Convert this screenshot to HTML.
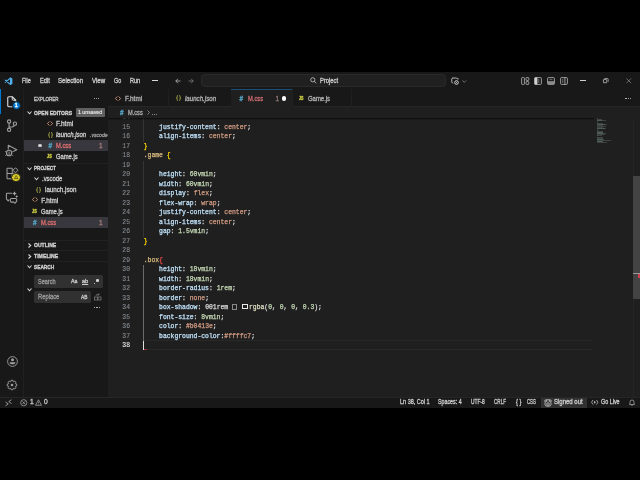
<!DOCTYPE html>
<html><head><meta charset="utf-8">
<style>
*{box-sizing:border-box;margin:0;padding:0}
html,body{width:640px;height:480px;background:#000;overflow:hidden}
body{font-family:"Liberation Sans",sans-serif;color:#cccccc;position:relative}
#app{-webkit-text-stroke:0.3px;will-change:transform}
.mono{-webkit-text-stroke:0.25px}
.a{position:absolute;white-space:nowrap}
#app{position:absolute;left:0;top:72px;width:640px;height:336px;background:#181818;overflow:hidden}
.t{font-size:6.3px;line-height:8px}
.mono{font-family:"Liberation Mono",monospace;font-size:6.4px;line-height:9.5px}
.ln{color:#6e7681;text-align:right;width:20px;-webkit-text-stroke:0.1px}
.p{color:#bfe0f8}.v{color:#d09a82}.n{color:#c4d8b4}.s{color:#d7ba7d}.b{color:#ffd700}.w{color:#dadada}
svg{position:absolute;overflow:visible}
</style></head><body>
<div id="app">
 <!-- title bar -->
 <div class="a" style="left:0;top:0;width:640px;height:17px;background:#181818"></div>
 <svg style="left:4px;top:5px" width="9" height="8.5" viewBox="0 0 18 17"><path d="M13 2L2.5 10.8M13 15L2.5 6.2" stroke="#4fb0ec" stroke-width="2.3" stroke-linecap="round"/><path d="M12 1L16.8 3.2V13.8L12 16Z" fill="#4fb0ec"/></svg>
 <!-- nav arrows -->
 <svg style="left:175px;top:5.5px" width="6" height="6" viewBox="0 0 12 12"><path d="M11 6H1.5M6 1.5L1.5 6L6 10.5" stroke="#cccccc" stroke-width="1.4" fill="none"/></svg>
 <svg style="left:188px;top:5.5px" width="6" height="6" viewBox="0 0 12 12"><path d="M1 6H10.5M6 1.5L10.5 6L6 10.5" stroke="#8a8a8a" stroke-width="1.4" fill="none"/></svg>
 <!-- command center -->
 <div class="a" style="left:201px;top:2.4px;width:245px;height:12.6px;background:#202020;border:0.6px solid #2a2a2a;border-radius:3.8px"></div>
 <svg style="left:310px;top:5.2px" width="7" height="7" viewBox="0 0 14 14"><circle cx="5.6" cy="5.6" r="4.2" stroke="#d0d0d0" stroke-width="1.5" fill="none"/><path d="M8.6 8.6L12.5 12.5" stroke="#d0d0d0" stroke-width="1.6"/></svg>
 <!-- copilot -->
 <svg style="left:451px;top:4.8px" width="9.5" height="8.5" viewBox="0 0 19 17"><path d="M9 2H4Q1.5 2 1.5 4.5V9Q1.5 11 3 12L4.5 13" stroke="#d0d0d0" stroke-width="1.8" fill="none" stroke-linejoin="round"/><path d="M9 2H10Q12 2 12.5 3.5" stroke="#d0d0d0" stroke-width="1.8" fill="none"/><circle cx="11" cy="11" r="3.6" stroke="#d8d8d8" stroke-width="2" fill="none"/><circle cx="11" cy="11" r="1" fill="#d8d8d8"/><path d="M14 2.5V5M12.8 3.8H15.2" stroke="#d8d8d8" stroke-width="1.2"/></svg>
 <svg style="left:461.5px;top:7.6px" width="4.6" height="2.8" viewBox="0 0 10 6"><path d="M1 1L5 5L9 1" stroke="#b0b0b0" stroke-width="1.3" fill="none"/></svg>
 <!-- layout icons -->
 <svg style="left:520.5px;top:4.8px" width="8.5" height="8" viewBox="0 0 17 16"><rect x="1.2" y="1.2" width="5.6" height="13.6" rx="1.4" stroke="#d0d0d0" stroke-width="1.4" fill="none"/><rect x="10" y="1.2" width="5.6" height="5.6" rx="1.2" stroke="#d0d0d0" stroke-width="1.4" fill="none"/><rect x="10" y="9.2" width="5.6" height="5.6" rx="1.2" stroke="#d0d0d0" stroke-width="1.4" fill="none"/></svg>
 <svg style="left:533.8px;top:4.8px" width="8" height="8" viewBox="0 0 16 16"><rect x="1.2" y="1.2" width="13.6" height="13.6" rx="1.8" stroke="#d0d0d0" stroke-width="1.4" fill="none"/><rect x="1.2" y="1.2" width="5.6" height="13.6" rx="1" fill="#d0d0d0"/><path d="M9.5 4V12" stroke="#d0d0d0" stroke-width="1"/></svg>
 <svg style="left:547px;top:4.8px" width="8" height="8" viewBox="0 0 16 16"><rect x="1.2" y="1.2" width="13.6" height="13.6" rx="1.8" stroke="#d0d0d0" stroke-width="1.4" fill="none"/><path d="M1.2 9.5H14.8" stroke="#d0d0d0" stroke-width="1.4"/><rect x="2" y="10" width="12" height="4" fill="#8a8a8a"/><path d="M5 5.2H11" stroke="#d0d0d0" stroke-width="0.9"/></svg>
 <svg style="left:559.8px;top:4.8px" width="8" height="8" viewBox="0 0 16 16"><rect x="1.2" y="1.2" width="13.6" height="13.6" rx="1.8" stroke="#d0d0d0" stroke-width="1.4" fill="none"/><path d="M9.8 1.2V14.8" stroke="#d0d0d0" stroke-width="1.4"/><path d="M5.5 4V12" stroke="#d0d0d0" stroke-width="0.9"/></svg>
 <!-- window controls -->
 <div class="a" style="left:580px;top:8.1px;width:5.8px;height:0.8px;background:#d0d0d0"></div>
 <svg style="left:602.8px;top:6.3px" width="5.6" height="5.2" viewBox="0 0 11 10"><rect x="0.8" y="2.6" width="6.6" height="6.6" rx="1" stroke="#d8d8d8" stroke-width="1.4" fill="none"/><path d="M2.8 0.8H8.4Q10.2 0.8 10.2 2.6V7.6" stroke="#d8d8d8" stroke-width="1.2" fill="none"/></svg>
 <svg style="left:626px;top:6px" width="5.6" height="5.6" viewBox="0 0 12 12"><path d="M1 1L11 11M11 1L1 11" stroke="#c8c8c8" stroke-width="1"/></svg>

 <!-- activity bar -->
 <div class="a" style="left:0;top:17px;width:24px;height:308px;background:#181818;border-right:1px solid #202020"></div>
 <div class="a" style="left:0;top:17px;width:1px;height:24.5px;background:#0078d4"></div>
 <!-- explorer icon -->
 <svg style="left:7px;top:23.5px" width="9.5" height="11.5" viewBox="0 0 19 23"><path d="M4 1.5H10.5L17.5 8.5V19Q17.5 21.5 15 21.5H4Q1.5 21.5 1.5 19V4Q1.5 1.5 4 1.5Z" stroke="#dedede" stroke-width="2.2" fill="none" stroke-linejoin="round"/><path d="M10.5 1.5V6.5Q10.5 8.5 12.5 8.5H17.5" stroke="#dedede" stroke-width="2" fill="none"/></svg>
 <div class="a" style="left:11.6px;top:29px;width:9px;height:9px;border-radius:50%;background:#0078d4;border:0.7px solid #181818;color:#fff;font-size:5.2px;line-height:7.6px;text-align:center;font-weight:bold">1</div>
 <!-- source control -->
 <svg style="left:2px;top:43px" width="20" height="20" viewBox="0 0 40 40"><circle cx="14.2" cy="13" r="3.3" stroke="#a0a0a0" stroke-width="2.2" fill="none"/><circle cx="14.2" cy="29.6" r="3.3" stroke="#a0a0a0" stroke-width="2.2" fill="none"/><circle cx="25.8" cy="17.3" r="3.3" stroke="#a0a0a0" stroke-width="2.2" fill="none"/><path d="M14.2 16.3V26.3M25 20.5Q24 24 19.5 24H14.5" stroke="#a0a0a0" stroke-width="2.2" fill="none"/></svg>
 <!-- run -->
 <svg style="left:2px;top:68px" width="20" height="20" viewBox="0 0 40 40"><path d="M12.5 19V10.5L29.6 19.4L22.5 23.2" stroke="#9a9a9a" stroke-width="2.2" fill="none" stroke-linejoin="round"/><path d="M14.2 20.5C10 20.5 9 23 9 26C9 29.5 11 31.5 14.2 31.5C17.4 31.5 19.4 29.5 19.4 26C19.4 23 18.4 20.5 14.2 20.5Z" stroke="#9a9a9a" stroke-width="2.4" fill="none"/><path d="M14.2 23V30M8 24L6 22.5M20.4 24L22.4 22.5M8.5 29.5L6.5 31.5M19.9 29.5L21.9 31.5" stroke="#9a9a9a" stroke-width="1.8"/></svg>
 <!-- extensions -->
 <svg style="left:2px;top:92px" width="20" height="20" viewBox="0 0 40 40"><path d="M10 8.5H20.5V29.5H10Z M10 19H30.5V29.5M20.5 19V29.5" stroke="#a0a0a0" stroke-width="2" fill="none"/><path d="M27 7.5L32 12.5L27 17.5L22 12.5Z" stroke="#a0a0a0" stroke-width="2" fill="none" stroke-linejoin="round"/></svg>
 <div class="a" style="left:11.4px;top:100.9px;width:9.2px;height:9.2px;border-radius:50%;background:#d6c926;border:0.8px solid #181818"></div>
 <svg style="left:13.8px;top:102.9px" width="4.4" height="4" viewBox="0 0 10 9"><path d="M5 1.2L9 8H1Z" stroke="#3a3510" stroke-width="1.5" fill="none" stroke-linejoin="round"/></svg>
 <!-- chat -->
 <svg style="left:2px;top:116px" width="20" height="20" viewBox="0 0 40 40"><path d="M20 10.5H10.5Q8.8 10.5 8.8 12.2V21.5Q8.8 22.8 10 23.4L12.3 25.8L14.5 23" stroke="#a0a0a0" stroke-width="2.1" fill="none" stroke-linejoin="round"/><path d="M18.8 20.8H27.2Q29.4 20.8 29.4 23V26Q29.4 28.2 27.2 28.2L26.2 30.6L23.4 28.2H18.8Q16.6 28.2 16.6 26V23Q16.6 20.8 18.8 20.8Z" stroke="#a0a0a0" stroke-width="2.1" fill="none" stroke-linejoin="round"/><path d="M25 6.5Q25.8 10.2 29.5 11Q25.8 11.8 25 15.5Q24.2 11.8 20.5 11Q24.2 10.2 25 6.5Z M29.5 14Q30.1 16.4 32.5 17Q30.1 17.6 29.5 20Q28.9 17.6 26.5 17Q28.9 16.4 29.5 14Z" fill="#a8a8a8"/></svg>
 <!-- account -->
 <svg style="left:6.6px;top:283.5px" width="11" height="11" viewBox="0 0 22 22"><circle cx="11" cy="11" r="9.8" stroke="#a0a0a0" stroke-width="1.8" fill="none"/><circle cx="11" cy="7.6" r="3" fill="#a0a0a0"/><path d="M5.2 12.6H16.8Q16.8 16.6 11 16.6Q5.2 16.6 5.2 12.6Z" fill="#a0a0a0"/></svg>
 <!-- settings -->
 <svg style="left:6px;top:307.3px" width="12" height="12" viewBox="0 0 24 24"><path d="M18.70 9.38L21.45 10.31L21.45 13.69L18.70 14.62L18.60 14.89L19.88 17.49L17.49 19.88L14.89 18.60L14.62 18.70L13.69 21.45L10.31 21.45L9.38 18.70L9.11 18.60L6.51 19.88L4.12 17.49L5.40 14.89L5.30 14.62L2.55 13.69L2.55 10.31L5.30 9.38L5.40 9.11L4.12 6.51L6.51 4.12L9.11 5.40L9.38 5.30L10.31 2.55L13.69 2.55L14.62 5.30L14.89 5.40L17.49 4.12L19.88 6.51L18.60 9.11Z" stroke="#a0a0a0" stroke-width="1.9" fill="none" stroke-linejoin="round"/><circle cx="12" cy="12" r="2.6" fill="#a0a0a0"/></svg>

 <!-- sidebar -->
 <div class="a" style="left:24px;top:17px;width:83.5px;height:308px;background:#181818"></div>
 <!-- open editors -->
 <svg style="left:27px;top:38.5px" width="5" height="3.5" viewBox="0 0 10 7"><path d="M1 1L5 5.5L9 1" stroke="#d8d8d8" stroke-width="2.1" fill="none"/></svg>
 <div class="a" style="left:76px;top:36.2px;width:28.7px;height:9px;background:#5f5f5f;border-radius:1px;"></div>
 <div class="a" style="left:24px;top:68.2px;width:83.5px;height:10.5px;background:#37373d"></div>
 <div class="a" style="left:38px;top:71.7px;width:3.5px;height:3.5px;border-radius:50%;background:#d0d0d0"></div>
 <div class="a" style="left:24px;top:91.2px;width:83.5px;height:0.5px;background:#212121"></div>
 <!-- project -->
 <svg style="left:27px;top:94.5px" width="5" height="3.5" viewBox="0 0 10 7"><path d="M1 1L5 5.5L9 1" stroke="#d8d8d8" stroke-width="2.1" fill="none"/></svg>
 <svg style="left:33.5px;top:105.2px" width="5" height="3.5" viewBox="0 0 10 7"><path d="M1 1L5 5.5L9 1" stroke="#d8d8d8" stroke-width="2.1" fill="none"/></svg>
 <div class="a" style="left:24px;top:145px;width:83.5px;height:11px;background:#37373d"></div>
 <!-- outline etc -->
 <div class="a" style="left:24px;top:167.5px;width:83.5px;height:0.5px;background:#212121"></div>
 <svg style="left:27.5px;top:171px" width="3.5" height="5" viewBox="0 0 7 10"><path d="M1 1L5.5 5L1 9" stroke="#d8d8d8" stroke-width="2.1" fill="none"/></svg>
 <div class="a" style="left:24px;top:178.3px;width:83.5px;height:0.5px;background:#212121"></div>
 <svg style="left:27.5px;top:181.5px" width="3.5" height="5" viewBox="0 0 7 10"><path d="M1 1L5.5 5L1 9" stroke="#d8d8d8" stroke-width="2.1" fill="none"/></svg>
 <div class="a" style="left:24px;top:189.3px;width:83.5px;height:0.5px;background:#212121"></div>
 <svg style="left:27px;top:193px" width="5" height="3.5" viewBox="0 0 10 7"><path d="M1 1L5 5.5L9 1" stroke="#d8d8d8" stroke-width="2.1" fill="none"/></svg>
 <!-- search inputs -->
 <div class="a" style="left:34.2px;top:203px;width:68.6px;height:12.5px;background:#313131;border-radius:1.5px"></div>
 <svg style="left:26.5px;top:215.5px" width="5" height="3.5" viewBox="0 0 10 7"><path d="M1 1L5 5.5L9 1" stroke="#d8d8d8" stroke-width="2.1" fill="none"/></svg>
 <div class="a" style="left:34.2px;top:218.8px;width:56.6px;height:12.5px;background:#313131;border-radius:1.5px"></div>
 <svg style="left:94px;top:221px" width="7.5" height="7.5" viewBox="0 0 15 15"><rect x="1" y="8" width="6" height="6" stroke="#8b8b8b" stroke-width="1.3" fill="none"/><rect x="8" y="8" width="6" height="6" stroke="#8b8b8b" stroke-width="1.3" fill="none"/><path d="M4 6C4 2 8 2 10 4M10 1V4H7" stroke="#8b8b8b" stroke-width="1.3" fill="none"/></svg>

 <!-- tabs -->
 <div class="a" style="left:108px;top:17px;width:532px;height:17.5px;background:#181818;border-bottom:0.5px solid #262626"></div>
 <div class="a" style="left:167.5px;top:17px;width:0.5px;height:17.5px;background:#202020"></div>
 <div class="a" style="left:230.5px;top:17px;width:0.5px;height:17.5px;background:#202020"></div>
 <div class="a" style="left:231px;top:17px;width:61px;height:18px;background:#1f1f1f;border-top:1px solid #1a4f78"></div>
 <div class="a" style="left:292px;top:17px;width:0.5px;height:17.5px;background:#202020"></div>
 <div class="a" style="left:351px;top:17px;width:0.5px;height:17.5px;background:#202020"></div>
 <div class="a" style="left:281.6px;top:23.9px;width:4.8px;height:4.8px;border-radius:50%;background:#ffffff"></div>
 <!-- breadcrumbs -->
 <div class="a" style="left:108px;top:35px;width:532px;height:11px;background:#1f1f1f"></div>
 <!-- editor -->
 <div class="a" style="left:108px;top:46px;width:532px;height:279px;background:#1f1f1f"></div>
 <div class="a" style="left:108px;top:46px;width:532px;height:279px;overflow:hidden"><div class="a" style="left:35px;top:222.35px;width:449.5px;height:9.6px;border-top:0.8px solid #282828;border-bottom:0.8px solid #282828"></div>
<div class="a mono ln" style="left:2px;top:-4.55px;color:#858a90">14</div>
<div class="a mono ln" style="left:2px;top:4.95px;color:#858a90">15</div>
<div class="a mono" style="left:35.75px;top:4.95px"><span class="w">&nbsp;&nbsp;&nbsp;&nbsp;</span><span class="p">justify-content</span><span class="w">:&nbsp;</span><span class="v">center</span><span class="w">;</span></div>
<div class="a mono ln" style="left:2px;top:14.45px;color:#858a90">16</div>
<div class="a mono" style="left:35.75px;top:14.45px"><span class="w">&nbsp;&nbsp;&nbsp;&nbsp;</span><span class="p">align-items</span><span class="w">:&nbsp;</span><span class="v">center</span><span class="w">;</span></div>
<div class="a mono ln" style="left:2px;top:23.95px;color:#858a90">17</div>
<div class="a mono" style="left:35.75px;top:23.95px"><span class="b">}</span></div>
<div class="a mono ln" style="left:2px;top:33.45px;color:#858a90">18</div>
<div class="a mono" style="left:35.75px;top:33.45px"><span class="s">.game</span><span class="w">&nbsp;</span><span class="b">{</span></div>
<div class="a mono ln" style="left:2px;top:42.95px;color:#858a90">19</div>
<div class="a mono ln" style="left:2px;top:52.45px;color:#858a90">20</div>
<div class="a mono" style="left:35.75px;top:52.45px"><span class="w">&nbsp;&nbsp;&nbsp;&nbsp;</span><span class="p">height</span><span class="w">:&nbsp;</span><span class="n">60vmin</span><span class="w">;</span></div>
<div class="a mono ln" style="left:2px;top:61.95px;color:#858a90">21</div>
<div class="a mono" style="left:35.75px;top:61.95px"><span class="w">&nbsp;&nbsp;&nbsp;&nbsp;</span><span class="p">width</span><span class="w">:&nbsp;</span><span class="n">60vmin</span><span class="w">;</span></div>
<div class="a mono ln" style="left:2px;top:71.45px;color:#858a90">22</div>
<div class="a mono" style="left:35.75px;top:71.45px"><span class="w">&nbsp;&nbsp;&nbsp;&nbsp;</span><span class="p">display</span><span class="w">:&nbsp;</span><span class="v">flex</span><span class="w">;</span></div>
<div class="a mono ln" style="left:2px;top:80.95px;color:#858a90">23</div>
<div class="a mono" style="left:35.75px;top:80.95px"><span class="w">&nbsp;&nbsp;&nbsp;&nbsp;</span><span class="p">flex-wrap</span><span class="w">:&nbsp;</span><span class="v">wrap</span><span class="w">;</span></div>
<div class="a mono ln" style="left:2px;top:90.45px;color:#858a90">24</div>
<div class="a mono" style="left:35.75px;top:90.45px"><span class="w">&nbsp;&nbsp;&nbsp;&nbsp;</span><span class="p">justify-content</span><span class="w">:&nbsp;</span><span class="v">center</span><span class="w">;</span></div>
<div class="a mono ln" style="left:2px;top:99.95px;color:#858a90">25</div>
<div class="a mono" style="left:35.75px;top:99.95px"><span class="w">&nbsp;&nbsp;&nbsp;&nbsp;</span><span class="p">align-items</span><span class="w">:&nbsp;</span><span class="v">center</span><span class="w">;</span></div>
<div class="a mono ln" style="left:2px;top:109.45px;color:#858a90">26</div>
<div class="a mono" style="left:35.75px;top:109.45px"><span class="w">&nbsp;&nbsp;&nbsp;&nbsp;</span><span class="p">gap</span><span class="w">:&nbsp;</span><span class="n">1.5vmin</span><span class="w">;</span></div>
<div class="a mono ln" style="left:2px;top:118.95px;color:#858a90">27</div>
<div class="a mono" style="left:35.75px;top:118.95px"><span class="b">}</span></div>
<div class="a mono ln" style="left:2px;top:128.45px;color:#858a90">28</div>
<div class="a mono ln" style="left:2px;top:137.95px;color:#858a90">29</div>
<div class="a mono" style="left:35.75px;top:137.95px"><span class="s">.box</span><span style="color:#f44747">{</span></div>
<div class="a mono ln" style="left:2px;top:147.45px;color:#858a90">30</div>
<div class="a mono" style="left:35.75px;top:147.45px"><span class="w">&nbsp;&nbsp;&nbsp;&nbsp;</span><span class="p">height</span><span class="w">:&nbsp;</span><span class="n">18vmin</span><span class="w">;</span></div>
<div class="a mono ln" style="left:2px;top:156.95px;color:#858a90">31</div>
<div class="a mono" style="left:35.75px;top:156.95px"><span class="w">&nbsp;&nbsp;&nbsp;&nbsp;</span><span class="p">width</span><span class="w">:&nbsp;</span><span class="n">18vmin</span><span class="w">;</span></div>
<div class="a mono ln" style="left:2px;top:166.45px;color:#858a90">32</div>
<div class="a mono" style="left:35.75px;top:166.45px"><span class="w">&nbsp;&nbsp;&nbsp;&nbsp;</span><span class="p">border-radius</span><span class="w">:&nbsp;</span><span class="n">1rem</span><span class="w">;</span></div>
<div class="a mono ln" style="left:2px;top:175.95px;color:#858a90">33</div>
<div class="a mono" style="left:35.75px;top:175.95px"><span class="w">&nbsp;&nbsp;&nbsp;&nbsp;</span><span class="p">border</span><span class="w">:&nbsp;</span><span class="v">none</span><span class="w">;</span></div>
<div class="a mono ln" style="left:2px;top:185.45px;color:#858a90">34</div>
<div class="a mono" style="left:35.75px;top:185.45px"><span class="w">&nbsp;&nbsp;&nbsp;&nbsp;</span><span class="p">box-shadow</span><span class="w">:&nbsp;</span><span class="w">001rem</span></div>
<div class="a mono ln" style="left:2px;top:194.95px;color:#858a90">35</div>
<div class="a mono" style="left:35.75px;top:194.95px"><span class="w">&nbsp;&nbsp;&nbsp;&nbsp;</span><span class="p">font-size</span><span class="w">:&nbsp;</span><span class="n">8vmin</span><span class="w">;</span></div>
<div class="a mono ln" style="left:2px;top:204.45px;color:#858a90">36</div>
<div class="a mono" style="left:35.75px;top:204.45px"><span class="w">&nbsp;&nbsp;&nbsp;&nbsp;</span><span class="p">color</span><span class="w">:&nbsp;</span><span class="v">#b0413e</span><span class="w">;</span></div>
<div class="a mono ln" style="left:2px;top:213.95px;color:#858a90">37</div>
<div class="a mono" style="left:35.75px;top:213.95px"><span class="w">&nbsp;&nbsp;&nbsp;&nbsp;</span><span class="p">background-color</span><span class="w">:</span><span class="v">#ffffc7</span><span class="w">;</span></div>
<div class="a mono ln" style="left:2px;top:223.45px;color:#e8e8e8">38</div>
<div class="a" style="left:34.9px;top:-4.55px;width:0.5px;height:28.50px;background:#353535"></div>
<div class="a" style="left:34.9px;top:42.95px;width:0.5px;height:76.00px;background:#353535"></div>
<div class="a" style="left:34.9px;top:147.45px;width:0.5px;height:76.00px;background:#6a6a6a"></div>
<div class="a mono" style="left:141px;top:185.45px"><span style="color:#dcdcc0">rgba</span><span class="w">(</span><span class="n">0</span><span class="w">,&nbsp;</span><span class="n">0</span><span class="w">,&nbsp;</span><span class="n">0</span><span class="w">,&nbsp;</span><span class="n">0.3</span><span class="w">);</span></div>
<div class="a" style="left:124px;top:185.5px;width:5px;height:6px;border:0.8px solid #8a8a8a"></div>
<div class="a" style="left:134.2px;top:185.5px;width:6.2px;height:5.8px;border:1.1px solid #e8e8e8;background:#1f1f1f"></div>
<div class="a" style="left:34.9px;top:222.55px;width:0.9px;height:9.3px;background:#e0e0e0"></div>
<div class="a" style="left:36px;top:231.05px;width:3px;height:1px;background:#a03040"></div>
<div class="a" style="left:488.8px;top:0.40px;width:1.36px;height:0.65px;background:#8aa59c;opacity:0.26"></div>
<div class="a" style="left:488.8px;top:1.06px;width:4.76px;height:0.65px;background:#8aa59c;opacity:0.26"></div>
<div class="a" style="left:488.8px;top:1.71px;width:5.10px;height:0.65px;background:#8aa59c;opacity:0.26"></div>
<div class="a" style="left:488.8px;top:2.37px;width:9.18px;height:0.65px;background:#8aa59c;opacity:0.26"></div>
<div class="a" style="left:488.8px;top:3.02px;width:0.34px;height:0.65px;background:#8aa59c;opacity:0.26"></div>
<div class="a" style="left:488.8px;top:4.33px;width:1.70px;height:0.65px;background:#8aa59c;opacity:0.26"></div>
<div class="a" style="left:488.8px;top:4.99px;width:6.12px;height:0.65px;background:#8aa59c;opacity:0.26"></div>
<div class="a" style="left:488.8px;top:5.64px;width:9.86px;height:0.65px;background:#8aa59c;opacity:0.26"></div>
<div class="a" style="left:488.8px;top:6.30px;width:8.50px;height:0.65px;background:#8aa59c;opacity:0.26"></div>
<div class="a" style="left:488.8px;top:6.95px;width:6.12px;height:0.65px;background:#8aa59c;opacity:0.26"></div>
<div class="a" style="left:488.8px;top:8.26px;width:9.18px;height:0.65px;background:#8aa59c;opacity:0.26"></div>
<div class="a" style="left:488.8px;top:8.92px;width:6.12px;height:0.65px;background:#8aa59c;opacity:0.26"></div>
<div class="a" style="left:488.8px;top:9.57px;width:9.52px;height:0.65px;background:#8aa59c;opacity:0.26"></div>
<div class="a" style="left:488.8px;top:10.23px;width:8.16px;height:0.65px;background:#8aa59c;opacity:0.26"></div>
<div class="a" style="left:488.8px;top:10.88px;width:0.34px;height:0.65px;background:#8aa59c;opacity:0.26"></div>
<div class="a" style="left:488.8px;top:11.54px;width:2.38px;height:0.65px;background:#8aa59c;opacity:0.26"></div>
<div class="a" style="left:488.8px;top:12.85px;width:6.46px;height:0.65px;background:#8aa59c;opacity:0.26"></div>
<div class="a" style="left:488.8px;top:13.50px;width:6.12px;height:0.65px;background:#8aa59c;opacity:0.26"></div>
<div class="a" style="left:488.8px;top:14.16px;width:6.12px;height:0.65px;background:#8aa59c;opacity:0.26"></div>
<div class="a" style="left:488.8px;top:14.81px;width:6.46px;height:0.65px;background:#8aa59c;opacity:0.26"></div>
<div class="a" style="left:488.8px;top:15.47px;width:9.52px;height:0.65px;background:#8aa59c;opacity:0.26"></div>
<div class="a" style="left:488.8px;top:16.12px;width:8.16px;height:0.65px;background:#8aa59c;opacity:0.26"></div>
<div class="a" style="left:488.8px;top:16.78px;width:5.10px;height:0.65px;background:#8aa59c;opacity:0.26"></div>
<div class="a" style="left:488.8px;top:17.43px;width:0.34px;height:0.65px;background:#8aa59c;opacity:0.26"></div>
<div class="a" style="left:488.8px;top:18.74px;width:1.70px;height:0.65px;background:#8aa59c;opacity:0.26"></div>
<div class="a" style="left:488.8px;top:19.40px;width:6.46px;height:0.65px;background:#8aa59c;opacity:0.26"></div>
<div class="a" style="left:488.8px;top:20.05px;width:6.12px;height:0.65px;background:#8aa59c;opacity:0.26"></div>
<div class="a" style="left:488.8px;top:20.71px;width:7.48px;height:0.65px;background:#8aa59c;opacity:0.26"></div>
<div class="a" style="left:488.8px;top:21.36px;width:5.78px;height:0.65px;background:#8aa59c;opacity:0.26"></div>
<div class="a" style="left:488.8px;top:22.02px;width:14.62px;height:0.65px;background:#8aa59c;opacity:0.26"></div>
<div class="a" style="left:488.8px;top:22.67px;width:6.12px;height:0.65px;background:#8aa59c;opacity:0.26"></div>
<div class="a" style="left:488.8px;top:23.33px;width:6.46px;height:0.65px;background:#8aa59c;opacity:0.26"></div>
<div class="a" style="left:488.8px;top:23.98px;width:9.86px;height:0.65px;background:#8aa59c;opacity:0.26"></div>
<div class="a" style="left:525px;top:0;width:1px;height:279px;background:#242424"></div>
<div class="a" style="left:525px;top:57.8px;width:7px;height:123px;background:#434343"></div>
<div class="a" style="left:525px;top:155px;width:7px;height:0.8px;background:#9a9a9a"></div>
<div class="a" style="left:530px;top:156px;width:2px;height:4px;background:#d04050"></div>
<div class="a" style="left:0;top:0;width:486px;height:1.5px;background:linear-gradient(#000000aa,#00000000)"></div></div>

 <!-- status bar -->
 <div class="a" style="left:0;top:325px;width:640px;height:11px;background:#181818;border-top:0.5px solid #262626"></div>
 <svg style="left:4.5px;top:327px" width="7" height="7.5" viewBox="0 0 14 15"><path d="M1 6L6.5 9.8L1 13.6M13 1.4L7.5 5.2L13 9" stroke="#d0d0d0" stroke-width="1.3" fill="none"/></svg>
 <svg style="left:20px;top:326.7px" width="7.5" height="7.5" viewBox="0 0 15 15"><circle cx="7.5" cy="7.5" r="6.2" stroke="#cccccc" stroke-width="1.2" fill="none"/><path d="M4.8 4.8L10.2 10.2M10.2 4.8L4.8 10.2" stroke="#cccccc" stroke-width="1.2"/></svg>
 <svg style="left:34.5px;top:326.7px" width="7" height="7" viewBox="0 0 14 14"><path d="M7 1.5L13 12.5H1Z" stroke="#cccccc" stroke-width="1.2" fill="none" stroke-linejoin="round"/><path d="M7 5.5V8.8M7 10V11" stroke="#cccccc" stroke-width="1.1"/></svg>
 <div class="a" style="left:540.5px;top:325.5px;width:46.3px;height:10.5px;background:#313131"></div>
 <svg style="left:543.8px;top:326.6px" width="8" height="8" viewBox="0 0 16 16"><path d="M4 6.5Q1.5 6.5 1.5 4Q1.5 1.5 4.5 1.5H11.5Q14.5 1.5 14.5 4Q14.5 6.5 12 6.5" stroke="#d8d8d8" stroke-width="1.5" fill="none"/><path d="M2 7V11Q2 14.5 8 14.5Q14 14.5 14 11V7" stroke="#d8d8d8" stroke-width="1.5" fill="none"/><circle cx="8" cy="10" r="2.6" stroke="#d8d8d8" stroke-width="1.4" fill="none"/><circle cx="5.2" cy="4" r="1.4" fill="#d8d8d8"/><circle cx="10.8" cy="4" r="1.4" fill="#d8d8d8"/></svg>
 <svg style="left:590.8px;top:327px" width="7.5" height="6.5" viewBox="0 0 15 13"><path d="M4 2L1.2 6.5L4 11M11 2L13.8 6.5L11 11" stroke="#d0d0d0" stroke-width="1.4" fill="none"/><path d="M7.5 3.5L9.3 6.5L7.5 9.5L5.7 6.5Z" fill="#d0d0d0"/></svg>
 <svg style="left:629px;top:326.7px" width="6" height="7" viewBox="0 0 12 14"><path d="M2 10V6A4 4 0 0 1 10 6V10L11 11H1Z" stroke="#cccccc" stroke-width="1.2" fill="none" stroke-linejoin="round"/><path d="M4.5 12.5H7.5" stroke="#cccccc" stroke-width="1.2"/></svg>
 <div class="a" style="left:21.90px;top:5.97px;font-size:6.4px;line-height:6.4px;color:#cccccc;transform:scaleX(0.844);transform-origin:0 0">File</div>
 <div class="a" style="left:40.00px;top:5.97px;font-size:6.4px;line-height:6.4px;color:#cccccc;transform:scaleX(0.889);transform-origin:0 0">Edit</div>
 <div class="a" style="left:58.40px;top:5.97px;font-size:6.4px;line-height:6.4px;color:#cccccc;transform:scaleX(0.957);transform-origin:0 0">Selection</div>
 <div class="a" style="left:92.40px;top:5.97px;font-size:6.4px;line-height:6.4px;color:#cccccc;transform:scaleX(0.958);transform-origin:0 0">View</div>
 <div class="a" style="left:114.40px;top:5.97px;font-size:6.4px;line-height:6.4px;color:#cccccc;transform:scaleX(0.843);transform-origin:0 0">Go</div>
 <div class="a" style="left:130.40px;top:5.97px;font-size:6.4px;line-height:6.4px;color:#cccccc;transform:scaleX(0.869);transform-origin:0 0">Run</div>
 <div class="a" style="left:319.90px;top:5.97px;font-size:6.4px;line-height:6.4px;color:#cccccc;transform:scaleX(0.904);transform-origin:0 0">Project</div>
 <div class="a" style="left:151.8px;top:8.1px;width:6.2px;height:1px;background:#d8d8d8"></div>
 <div class="a" style="left:34.20px;top:23.87px;font-size:6.0px;line-height:6.0px;color:#cccccc;transform:scaleX(0.750);transform-origin:0 0">EXPLORER</div>
 <div class="a" style="left:34.40px;top:37.77px;font-size:6.0px;line-height:6.0px;color:#cccccc;transform:scaleX(0.840);transform-origin:0 0;font-weight:bold;-webkit-text-stroke:0.4px">OPEN EDITORS</div>
 <div class="a" style="left:78.40px;top:38.46px;font-size:5.6px;line-height:5.6px;color:#f0f0f0;transform:scaleX(0.936);transform-origin:0 0;-webkit-text-stroke:0.1px">1 unsaved</div>
 <div class="a" style="left:56.40px;top:49.37px;font-size:6.4px;line-height:6.4px;color:#cccccc;transform:scaleX(1.008);transform-origin:0 0">F.html</div>
 <div class="a" style="left:56.40px;top:59.87px;font-size:6.4px;line-height:6.4px;color:#cccccc;transform:scaleX(0.933);transform-origin:0 0;font-style:italic">launch.json</div>
 <div class="a" style="left:90.40px;top:60.76px;font-size:5.2px;line-height:5.2px;color:#9d9d9d;transform:scaleX(0.988);transform-origin:0 0;font-style:italic">.vscode</div>
 <div class="a" style="left:56.40px;top:70.87px;font-size:6.4px;line-height:6.4px;color:#dc6c6e;transform:scaleX(0.910);transform-origin:0 0">M.css</div>
 <div class="a" style="left:98.90px;top:70.87px;font-size:6.4px;line-height:6.4px;color:#a47c78">1</div>
 <div class="a" style="left:56.40px;top:82.37px;font-size:6.4px;line-height:6.4px;color:#cccccc;transform:scaleX(0.911);transform-origin:0 0">Game.js</div>
 <div class="a" style="left:34.40px;top:93.07px;font-size:6.0px;line-height:6.0px;color:#cccccc;transform:scaleX(0.773);transform-origin:0 0;font-weight:bold;-webkit-text-stroke:0.4px">PROJECT</div>
 <div class="a" style="left:41.70px;top:104.17px;font-size:6.4px;line-height:6.4px;color:#cccccc;transform:scaleX(0.925);transform-origin:0 0">.vscode</div>
 <div class="a" style="left:45.10px;top:115.07px;font-size:6.4px;line-height:6.4px;color:#cccccc;transform:scaleX(0.973);transform-origin:0 0">launch.json</div>
 <div class="a" style="left:41.20px;top:125.67px;font-size:6.4px;line-height:6.4px;color:#cccccc">F.html</div>
 <div class="a" style="left:41.40px;top:137.07px;font-size:6.4px;line-height:6.4px;color:#cccccc;transform:scaleX(0.911);transform-origin:0 0">Game.js</div>
 <div class="a" style="left:41.40px;top:147.87px;font-size:6.4px;line-height:6.4px;color:#dc6c6e;transform:scaleX(0.910);transform-origin:0 0">M.css</div>
 <div class="a" style="left:98.90px;top:147.87px;font-size:6.4px;line-height:6.4px;color:#a47c78">1</div>
 <div class="a" style="left:34.40px;top:170.07px;font-size:6.0px;line-height:6.0px;color:#cccccc;transform:scaleX(0.843);transform-origin:0 0;font-weight:bold;-webkit-text-stroke:0.4px">OUTLINE</div>
 <div class="a" style="left:34.40px;top:180.87px;font-size:6.0px;line-height:6.0px;color:#cccccc;transform:scaleX(0.864);transform-origin:0 0;font-weight:bold;-webkit-text-stroke:0.4px">TIMELINE</div>
 <div class="a" style="left:34.40px;top:191.77px;font-size:6.0px;line-height:6.0px;color:#cccccc;transform:scaleX(0.797);transform-origin:0 0;font-weight:bold;-webkit-text-stroke:0.4px">SEARCH</div>
 <div class="a" style="left:37.90px;top:206.57px;font-size:6.4px;line-height:6.4px;color:#9c9c9c;transform:scaleX(0.863);transform-origin:0 0">Search</div>
 <div class="a" style="left:71.20px;top:206.87px;font-size:5.8px;line-height:5.8px;color:#cccccc;transform:scaleX(0.902);transform-origin:0 0">Aa</div>
 <div class="a" style="left:82.40px;top:206.87px;font-size:5.8px;line-height:5.8px;color:#cccccc;transform:scaleX(0.961);transform-origin:0 0;text-decoration:underline">ab</div>
 <div class="a" style="left:94px;top:211px;width:1.2px;height:1.2px;border-radius:50%;background:#e0e0e0"></div><div class="a" style="left:95.9px;top:207px;width:2.7px;height:2.7px;border-radius:50%;background:#d8d8d8"></div>
 <div class="a" style="left:37.90px;top:222.37px;font-size:6.4px;line-height:6.4px;color:#9c9c9c;transform:scaleX(0.911);transform-origin:0 0">Replace</div>
 <div class="a" style="left:81.20px;top:222.67px;font-size:5.8px;line-height:5.8px;color:#cccccc;transform:scaleX(0.827);transform-origin:0 0">AB</div>
 <div class="a" style="left:94.00px;top:235.00px;width:1.2px;height:1.2px;border-radius:50%;background:#cccccc"></div> <div class="a" style="left:96.40px;top:235.00px;width:1.2px;height:1.2px;border-radius:50%;background:#cccccc"></div> <div class="a" style="left:98.80px;top:235.00px;width:1.2px;height:1.2px;border-radius:50%;background:#cccccc"></div>
 <div class="a" style="left:94.00px;top:25.70px;width:1.2px;height:1.2px;border-radius:50%;background:#cccccc"></div> <div class="a" style="left:96.15px;top:25.70px;width:1.2px;height:1.2px;border-radius:50%;background:#cccccc"></div> <div class="a" style="left:98.30px;top:25.70px;width:1.2px;height:1.2px;border-radius:50%;background:#cccccc"></div>
 <svg style="left:47.00px;top:48.90px" width="6" height="5" viewBox="0 0 12 10"><path d="M4.6 1L1 5L4.6 9M7.4 1L11 5L7.4 9" stroke="#e0a07c" stroke-width="1.7" fill="none"/></svg>
 <svg style="left:47.50px;top:59.50px" width="5.2" height="6" viewBox="0 0 10 12"><path d="M3.6 0.8C2.2 0.8 2.2 1.6 2.2 3V4.5C2.2 5.5 1.7 6 0.8 6C1.7 6 2.2 6.5 2.2 7.5V9C2.2 10.4 2.2 11.2 3.6 11.2M6.4 0.8C7.8 0.8 7.8 1.6 7.8 3V4.5C7.8 5.5 8.3 6 9.2 6C8.3 6 7.8 6.5 7.8 7.5V9C7.8 10.4 7.8 11.2 6.4 11.2" stroke="#c8c858" stroke-width="1.5" fill="none"/></svg>
 <div class="a" style="left:48.40px;top:70.87px;font-size:6.4px;line-height:6.4px;color:#519aba;font-weight:bold;-webkit-text-stroke:0.4px">#</div>
 <div class="a" style="left:47.40px;top:83.25px;font-size:4.6px;line-height:4.6px;color:#cbcb41;transform:scaleX(0.835);transform-origin:0 0;font-weight:bold;-webkit-text-stroke:0.4px">JS</div>
 <svg style="left:35.80px;top:114.70px" width="5.2" height="6" viewBox="0 0 10 12"><path d="M3.6 0.8C2.2 0.8 2.2 1.6 2.2 3V4.5C2.2 5.5 1.7 6 0.8 6C1.7 6 2.2 6.5 2.2 7.5V9C2.2 10.4 2.2 11.2 3.6 11.2M6.4 0.8C7.8 0.8 7.8 1.6 7.8 3V4.5C7.8 5.5 8.3 6 9.2 6C8.3 6 7.8 6.5 7.8 7.5V9C7.8 10.4 7.8 11.2 6.4 11.2" stroke="#c8c858" stroke-width="1.5" fill="none"/></svg>
 <svg style="left:31.70px;top:125.30px" width="6" height="5" viewBox="0 0 12 10"><path d="M4.6 1L1 5L4.6 9M7.4 1L11 5L7.4 9" stroke="#e0a07c" stroke-width="1.7" fill="none"/></svg>
 <div class="a" style="left:32.40px;top:137.95px;font-size:4.6px;line-height:4.6px;color:#cbcb41;transform:scaleX(0.835);transform-origin:0 0;font-weight:bold;-webkit-text-stroke:0.4px">JS</div>
 <div class="a" style="left:32.90px;top:147.87px;font-size:6.4px;line-height:6.4px;color:#519aba;font-weight:bold;-webkit-text-stroke:0.4px">#</div>
 <svg style="left:115.20px;top:23.80px" width="6" height="5" viewBox="0 0 12 10"><path d="M4.6 1L1 5L4.6 9M7.4 1L11 5L7.4 9" stroke="#e0a07c" stroke-width="1.7" fill="none"/></svg>
 <div class="a" style="left:125.10px;top:24.17px;font-size:6.4px;line-height:6.4px;color:#b0b0b0">F.html</div>
 <svg style="left:176.10px;top:23.00px" width="5.2" height="6" viewBox="0 0 10 12"><path d="M3.6 0.8C2.2 0.8 2.2 1.6 2.2 3V4.5C2.2 5.5 1.7 6 0.8 6C1.7 6 2.2 6.5 2.2 7.5V9C2.2 10.4 2.2 11.2 3.6 11.2M6.4 0.8C7.8 0.8 7.8 1.6 7.8 3V4.5C7.8 5.5 8.3 6 9.2 6C8.3 6 7.8 6.5 7.8 7.5V9C7.8 10.4 7.8 11.2 6.4 11.2" stroke="#c8c858" stroke-width="1.5" fill="none"/></svg>
 <div class="a" style="left:185.10px;top:24.17px;font-size:6.4px;line-height:6.4px;color:#b0b0b0;transform:scaleX(0.961);transform-origin:0 0;font-style:italic">launch.json</div>
 <div class="a" style="left:239.40px;top:24.17px;font-size:6.4px;line-height:6.4px;color:#519aba;font-weight:bold;-webkit-text-stroke:0.4px">#</div>
 <div class="a" style="left:247.90px;top:24.17px;font-size:6.4px;line-height:6.4px;color:#c86a70;transform:scaleX(0.904);transform-origin:0 0">M.css</div>
 <div class="a" style="left:275.40px;top:24.17px;font-size:6.4px;line-height:6.4px;color:#8e7672">1</div>
 <div class="a" style="left:298.70px;top:25.05px;font-size:4.6px;line-height:4.6px;color:#cbcb41;transform:scaleX(0.782);transform-origin:0 0;font-weight:bold;-webkit-text-stroke:0.4px">JS</div>
 <div class="a" style="left:307.90px;top:24.17px;font-size:6.4px;line-height:6.4px;color:#b0b0b0;transform:scaleX(0.928);transform-origin:0 0">Game.js</div>
 <div class="a" style="left:625.40px;top:26.00px;width:1.2px;height:1.2px;border-radius:50%;background:#cccccc"></div> <div class="a" style="left:627.85px;top:26.00px;width:1.2px;height:1.2px;border-radius:50%;background:#cccccc"></div> <div class="a" style="left:630.30px;top:26.00px;width:1.2px;height:1.2px;border-radius:50%;background:#cccccc"></div>
 <div class="a" style="left:120.00px;top:37.67px;font-size:6.4px;line-height:6.4px;color:#519aba;font-weight:bold;-webkit-text-stroke:0.4px">#</div>
 <div class="a" style="left:128.30px;top:37.67px;font-size:6.4px;line-height:6.4px;color:#a9a9a9;transform:scaleX(0.886);transform-origin:0 0">M.css</div>
 <svg style="left:147.2px;top:38.3px" width="3" height="5" viewBox="0 0 6 10"><path d="M1 1L5 5L1 9" stroke="#a9a9a9" stroke-width="1.3" fill="none"/></svg>
 <div class="a" style="left:152.30px;top:41.90px;width:1.0px;height:1.0px;border-radius:50%;background:#a9a9a9"></div> <div class="a" style="left:154.15px;top:41.90px;width:1.0px;height:1.0px;border-radius:50%;background:#a9a9a9"></div> <div class="a" style="left:156.00px;top:41.90px;width:1.0px;height:1.0px;border-radius:50%;background:#a9a9a9"></div>
 <div class="a" style="left:29.90px;top:327.18px;font-size:6.6px;line-height:6.6px;color:#cccccc">1</div>
 <div class="a" style="left:43.90px;top:327.18px;font-size:6.6px;line-height:6.6px;color:#cccccc">0</div>
 <div class="a" style="left:399.50px;top:327.18px;font-size:6.6px;line-height:6.6px;color:#cccccc;transform:scaleX(0.834);transform-origin:0 0">Ln 38, Col 1</div>
 <div class="a" style="left:438.20px;top:327.18px;font-size:6.6px;line-height:6.6px;color:#cccccc;transform:scaleX(0.804);transform-origin:0 0">Spaces: 4</div>
 <div class="a" style="left:471.30px;top:327.18px;font-size:6.6px;line-height:6.6px;color:#cccccc;transform:scaleX(0.738);transform-origin:0 0">UTF-8</div>
 <div class="a" style="left:494.40px;top:327.18px;font-size:6.6px;line-height:6.6px;color:#cccccc;transform:scaleX(0.702);transform-origin:0 0">CRLF</div>
 <div class="a" style="left:516.40px;top:327.18px;font-size:6.6px;line-height:6.6px;color:#cccccc;transform:scaleX(0.865);transform-origin:0 0">{ }</div>
 <div class="a" style="left:526.70px;top:327.18px;font-size:6.6px;line-height:6.6px;color:#cccccc;transform:scaleX(0.656);transform-origin:0 0">CSS</div>
 <div class="a" style="left:554.10px;top:327.18px;font-size:6.6px;line-height:6.6px;color:#cccccc;transform:scaleX(0.909);transform-origin:0 0">Signed out</div>
 <div class="a" style="left:600.80px;top:327.18px;font-size:6.6px;line-height:6.6px;color:#cccccc;transform:scaleX(0.818);transform-origin:0 0">Go Live</div>
</div>
</body></html>
